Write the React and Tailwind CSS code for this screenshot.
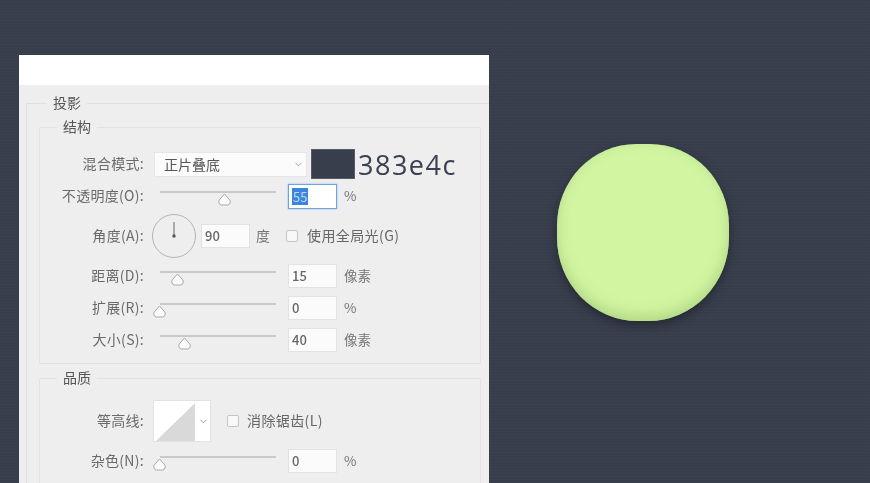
import { ChevronDown } from "lucide-react";

const CJK = "font-['Noto_Sans_CJK_SC','Noto_Sans',sans-serif]";

function Thumb({ left }) {
  return (
    <svg className="absolute top-[9px]" style={{ left }} width="15" height="13" viewBox="0 0 15 13">
      <path
        d="M7.5 1 L12 6 Q14 8 13 10 Q12.5 12 10.5 12 L4.5 12 Q2.5 12 2 10 Q1 8 3 6 Z"
        fill="#fbfbfb"
        stroke="#a9a9a9"
      />
    </svg>
  );
}

function Label({ children }) {
  return <div className="w-[104px] shrink-0 pb-[2px] text-right text-[14px] tracking-[0.3px] text-[#6a6a6a]">{children}</div>;
}

function NumberBox({ value, active, className = "" }) {
  if (active) {
    return (
      <div className="flex h-[25px] w-[49px] shrink-0 items-center border border-[#6ea3dc] bg-white pl-[3px] shadow-[0_0_2px_#8fbbe8]">
        <span className="bg-[#3b86dc] px-px text-[13px] leading-[17px] text-[#bcd8f5]">{value}</span>
      </div>
    );
  }
  return (
    <div className={`flex h-[24px] w-[49px] shrink-0 items-center border border-[#e2e2e2] bg-[#fbfbfb] pl-[3px] text-[13px] font-medium text-[#666] ${className}`}>
      {value}
    </div>
  );
}

function SliderRow({ label, value, unit, thumb, height, active }) {
  return (
    <div className={`flex items-center ${height}`}>
      <Label>{label}</Label>
      <div className="relative ml-[10px] h-[24px] w-[134px] shrink-0 pt-[7px]">
        <div className="ml-[6px] h-[2px] w-[116px] bg-[#c9c9c9]" />
        <Thumb left={thumb} />
      </div>
      <NumberBox value={value} active={active} />
      <span className="ml-[7px] pb-[2px] text-[13.5px] text-[#777]">{unit}</span>
    </div>
  );
}

function Group({ title, children, className = "" }) {
  return (
    <fieldset className={`ml-[12px] w-[442px] rounded-[2px] border border-[#e2e2e2] ${className}`}>
      <legend className="ml-[17px] px-[6px] pb-[2px] text-[14px] leading-[18px] text-[#555]">{title}</legend>
      {children}
    </fieldset>
  );
}

function Panel() {
  return (
    <div className={`h-[428px] w-[470px] shrink-0 overflow-hidden bg-[#eeeeee] blur-[0.5px] ${CJK}`}>
      <div className="h-[30px] bg-white" />
      <fieldset className="ml-[7px] mt-[8px] w-[480px] border border-[#e0e0e0]">
        <legend className="ml-[20px] px-[6px] pb-[2px] text-[14px] leading-[18px] text-[#555]">投影</legend>

        <Group title="结构" className="mt-[4px] pb-[5px]">
          <div className="mt-[11px] flex h-[32px] items-center">
            <Label>混合模式:</Label>
            <div className="ml-[10px] flex h-[25px] w-[153px] shrink-0 items-center justify-between border border-[#e6e6e6] bg-[#fbfbfb] pl-[9px] pr-[2px] text-[14px] text-[#555]">
              正片叠底
              <ChevronDown size={11} strokeWidth={1.5} className="text-[#888]" />
            </div>
            <div className="ml-[4px] h-[30px] w-[44px] shrink-0 border border-[#555a66] bg-[#383e4c]" />
            <span className="ml-[3px] font-['Open_Sans',sans-serif] text-[27px] leading-none tracking-[1.5px] text-[#3a4050]">
              383e4c
            </span>
          </div>
          <SliderRow label="不透明度(O):" value="55" unit="%" thumb={63} height="h-[32px]" active />
          <div className="mt-[2px] flex h-[44px] items-center">
            <Label>角度(A):</Label>
            <svg className="ml-[7px] shrink-0" width="46" height="46" viewBox="0 0 46 46">
              <circle cx="23" cy="23" r="21.5" fill="none" stroke="#b5b5b5" strokeWidth="1" />
              <path d="M23 9 V23" stroke="#666" strokeWidth="1" />
              <circle cx="23" cy="23" r="1.7" fill="#555" />
            </svg>
            <NumberBox value="90" className="ml-[4px]" />
            <span className="ml-[6px] pb-[2px] text-[14px] text-[#777]">度</span>
            <div className="ml-[16px] h-[12px] w-[12px] shrink-0 rounded-[2px] border border-[#c4c4c4] bg-[#f8f8f8]" />
            <span className="ml-[9px] pb-[2px] text-[14px] tracking-[0.4px] text-[#666]">使用全局光(G)</span>
          </div>
          <SliderRow label="距离(D):" value="15" unit="像素" thumb={16} height="h-[36px]" />
          <SliderRow label="扩展(R):" value="0" unit="%" thumb={-2} height="h-[28px]" />
          <SliderRow label="大小(S):" value="40" unit="像素" thumb={23} height="h-[36px]" />
        </Group>

        <Group title="品质" className="mt-[4px] pb-[20px]">
          <div className="mt-[12px] flex h-[42px] items-center">
            <Label>等高线:</Label>
            <div className="ml-[9px] flex h-[42px] shrink-0 border border-[#e2e2e2]">
              <svg width="43" height="40" viewBox="0 0 43 40" className="bg-white">
                <path d="M2 40 L41 2 V40 Z" fill="#d9d9d9" />
              </svg>
              <div className="flex w-[13px] items-center justify-center bg-white">
                <ChevronDown size={11} strokeWidth={1.5} className="text-[#777]" />
              </div>
            </div>
            <div className="ml-[16px] h-[12px] w-[12px] shrink-0 rounded-[2px] border border-[#c4c4c4] bg-[#f8f8f8]" />
            <span className="ml-[8px] pb-[2px] text-[14px] tracking-[0.4px] text-[#666]">消除锯齿(L)</span>
          </div>
          <div className="mt-[7px]">
            <SliderRow label="杂色(N):" value="0" unit="%" thumb={-2} height="h-[24px]" />
          </div>
        </Group>
      </fieldset>
    </div>
  );
}

export default function App() {
  return (
    <div className="flex h-[483px] w-[870px] overflow-hidden bg-[#383e4c] bg-[repeating-linear-gradient(0deg,rgba(255,255,255,0.012)_0px,rgba(255,255,255,0.012)_1px,rgba(0,0,0,0.03)_2px,rgba(0,0,0,0)_3px)] pl-[19px] pt-[55px]">
      <Panel />
      <div className="ml-[68px] mt-[89px] h-[177px] w-[172px] shrink-0 rounded-[46%_46%_47%_47%] bg-[#d1f5a1] shadow-[0_4px_10px_rgba(24,27,35,0.6),inset_0_-7px_12px_rgba(160,200,120,0.5),inset_0_0_8px_rgba(180,215,140,0.35)]" />
    </div>
  );
}
